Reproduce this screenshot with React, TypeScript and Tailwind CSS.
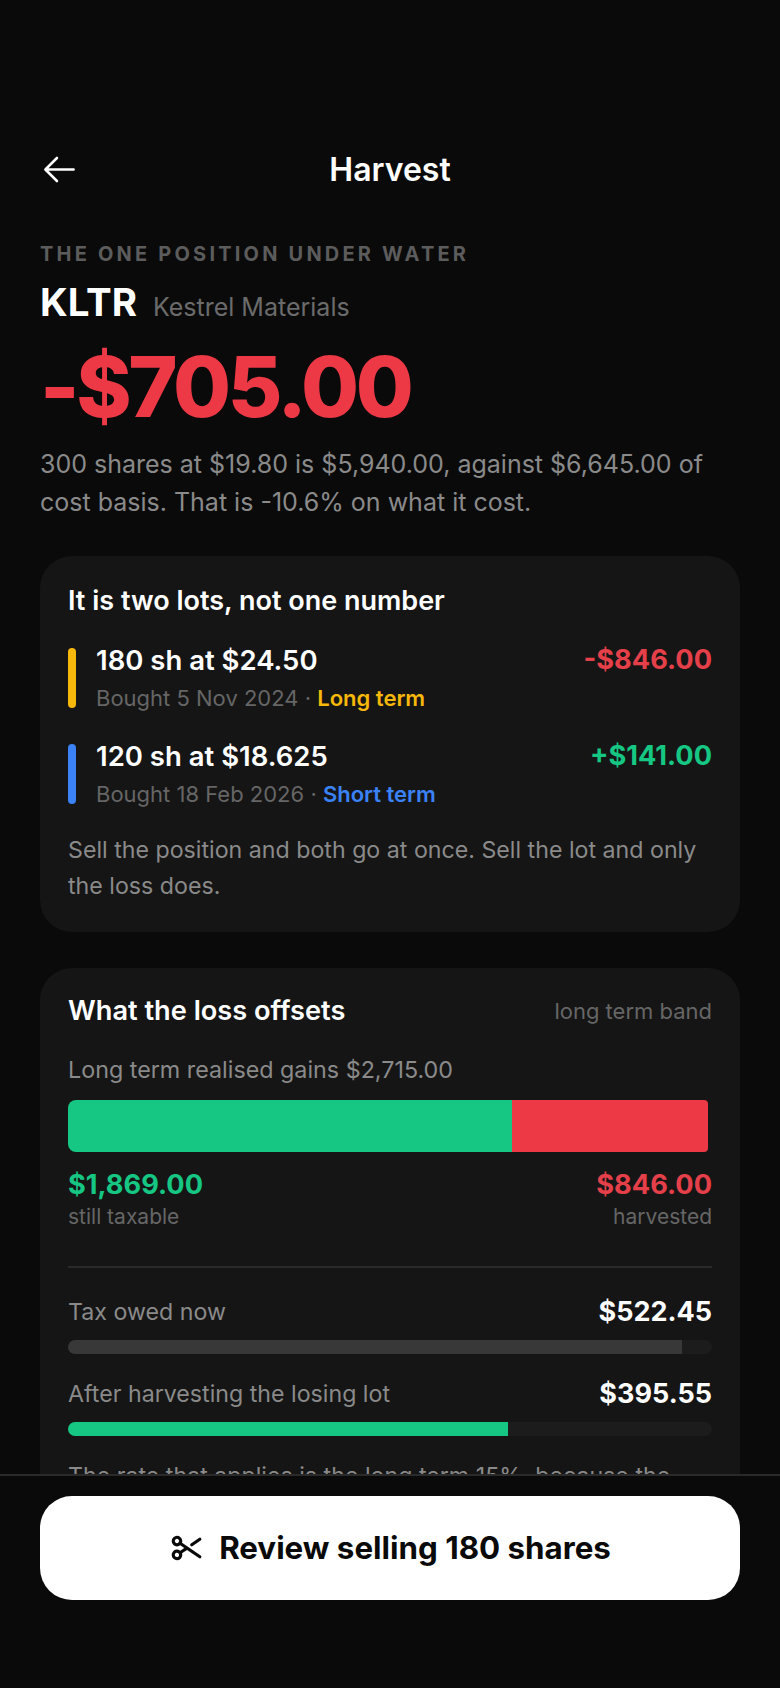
import { PiArrowLeft, PiScissorsBold } from "react-icons/pi";

function Lot({ bar, title, amount, amountColor, date, term, termColor }: { bar: string; title: string; amount: string; amountColor: string; date: string; term: string; termColor: string }) {
  return (
    <div className="flex items-stretch gap-[20px]">
      <div className={`w-[8px] h-[60px] rounded-full ${bar}`} />
      <div className="flex-1 min-w-0 flex justify-between">
        <div>
          <div className="text-[27.5px] leading-[24px] font-semibold text-white">{title}</div>
          <div className="mt-[16px] text-[22px] leading-[20px] text-[#666666]">
            {date} · <span className={`font-semibold ${termColor}`}>{term}</span>
          </div>
        </div>
        <div className={`text-[27.2px] leading-[24px] font-bold ${amountColor}`}>{amount}</div>
      </div>
    </div>
  );
}

function Meter({ label, value, fill, width }: { label: string; value: string; fill: string; width: string }) {
  return (
    <div>
      <div className="flex items-center justify-between h-[34px]">
        <span className="text-[23.2px] text-[#8a8a8a]">{label}</span>
        <span className="text-[27px] font-bold text-white">{value}</span>
      </div>
      <div className="mt-[10px] h-[14px] rounded-full bg-[#1c1c1c] overflow-hidden">
        <div className={`h-full ${fill} ${width}`} />
      </div>
    </div>
  );
}

export default function App() {
  return (
    <div className="w-[780px] h-[1688px] bg-[#0a0a0a] flex flex-col overflow-hidden font-['Inter',sans-serif]">
      <div className="flex-1 min-h-0 overflow-hidden px-[40px] pt-[140px]">
        <header className="relative h-[60px] flex items-center justify-center">
          <PiArrowLeft className="absolute left-[-1px] top-[9px] text-white" size={41} />
          <h1 className="text-[32px] font-semibold text-white">Harvest</h1>
        </header>
        <div className="mt-[40px] text-[20px] leading-[28px] font-bold tracking-[0.16em] text-[#5c5c5c]">THE ONE POSITION UNDER WATER</div>
        <div className="mt-[11px] flex items-baseline gap-[16px]">
          <span className="text-[38.5px] leading-[46px] font-bold text-white">KLTR</span>
          <span className="text-[25px] text-[#6b6b6b]">Kestrel Materials</span>
        </div>
        <div className="mt-[10px] text-[84px] leading-[100px] font-extrabold tracking-[-0.04em] text-[#ec3945]">-$705.00</div>
        <p className="mt-[8px] text-[25px] leading-[38px] text-[#8a8a8a]">300 shares at $19.80 is $5,940.00, against $6,645.00 of cost basis. That is -10.6% on what it cost.</p>

        <section className="mt-[35px] rounded-[32px] bg-[#151515] p-[28px]">
          <h2 className="text-[27px] leading-[34px] font-semibold text-white">It is two lots, not one number</h2>
          <div className="mt-[30px] flex flex-col gap-[36px]">
            <Lot bar="bg-[#f5b80b]" title="180 sh at $24.50" amount="-$846.00" amountColor="text-[#e5404a]" date="Bought 5 Nov 2024" term="Long term" termColor="text-[#f5b80b]" />
            <Lot bar="bg-[#3b82f6]" title="120 sh at $18.625" amount="+$141.00" amountColor="text-[#16c784]" date="Bought 18 Feb 2026" term="Short term" termColor="text-[#3b82f6]" />
          </div>
          <p className="mt-[28px] text-[23.2px] leading-[36px] text-[#8a8a8a]">Sell the position and both go at once. Sell the lot and only the loss does.</p>
        </section>

        <section className="mt-[36px] rounded-[32px] bg-[#151515] px-[28px] pt-[28px] pb-[28px]">
          <div className="flex items-center justify-between h-[32px]">
            <h2 className="text-[27.2px] font-semibold text-white">What the loss offsets</h2>
            <span className="text-[22px] text-[#666666]">long term band</span>
          </div>
          <div className="mt-[26px] text-[23.3px] leading-[32px] text-[#8a8a8a]">Long term realised gains $2,715.00</div>
          <div className="mt-[14px] flex w-[640px] h-[52px] rounded-l-[8px] rounded-r-[4px] overflow-hidden">
            <div className="w-[444px] bg-[#16c784]" />
            <div className="flex-1 bg-[#ec3945]" />
          </div>
          <div className="mt-[17px] flex justify-between">
            <div>
              <div className="text-[27.2px] leading-[32px] font-bold text-[#16c784]">$1,869.00</div>
              <div className="mt-[1px] text-[21px] leading-[30px] text-[#666666]">still taxable</div>
            </div>
            <div className="text-right">
              <div className="text-[27.2px] leading-[32px] font-bold text-[#e5404a]">$846.00</div>
              <div className="mt-[1px] text-[21px] leading-[30px] text-[#666666]">harvested</div>
            </div>
          </div>
          <div className="mt-[34px] h-[2px] bg-[#2a2a2a]" />
          <div className="mt-[28px] flex flex-col gap-[24px]">
            <Meter label="Tax owed now" value="$522.45" fill="bg-[#383838]" width="w-[614px]" />
            <Meter label="After harvesting the losing lot" value="$395.55" fill="bg-[#16c784]" width="w-[440px]" />
          </div>
          <p className="mt-[22px] text-[23.2px] leading-[36px] text-[#8a8a8a]">The rate that applies is the long term 15%, because the</p>
        </section>
      </div>
      <footer className="shrink-0 h-[214px] border-t-2 border-[#2a2a2a] bg-[#0a0a0a] px-[40px] pt-[20px]">
        <button className="w-full h-[104px] rounded-[32px] bg-white flex items-center justify-center gap-[16px] text-[#0a0a0a]">
          <PiScissorsBold size={34} />
          <span className="text-[31.3px] font-bold">Review selling 180 shares</span>
        </button>
      </footer>
    </div>
  );
}
